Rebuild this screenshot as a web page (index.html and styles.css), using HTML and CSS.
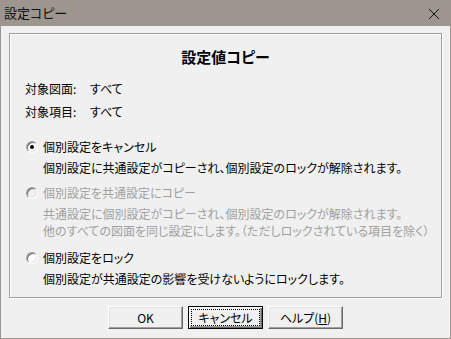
FILE: index.html
```html
<!DOCTYPE html>
<html lang="ja">
<head>
    <meta charset="UTF-8">
    <title>設定コピー</title>
    <link rel="stylesheet" href="styles.css">
</head>
<body>
    <div class="window">
        <div class="titlebar">
            <span class="title">設定コピー</span>
            <svg class="close" width="12" height="12" viewBox="0 0 12 12">
                <path d="M1 1 L11 11 M11 1 L1 11" stroke="#111" stroke-width="1" fill="none"/>
            </svg>
        </div>

        <div class="content">
            <div class="group">
                <h1>設定値コピー</h1>

                <div class="info"><span class="key">対象図面:</span><span>すべて</span></div>
                <div class="info"><span class="key">対象項目:</span><span>すべて</span></div>

                <div class="option first">
                    <div class="label"><span class="radio checked"></span>個別設定をキャンセル</div>
                    <div class="desc">個別設定に共通設定がコピーされ、個別設定のロックが解除されます。</div>
                </div>

                <div class="option disabled">
                    <div class="label"><span class="radio"></span>個別設定を共通設定にコピー</div>
                    <div class="desc">共通設定に個別設定がコピーされ、個別設定のロックが解除されます。</div>
                    <div class="desc">他のすべての図面を同じ設定にします。（ただしロックされている項目を除く）</div>
                </div>

                <div class="option last">
                    <div class="label"><span class="radio"></span>個別設定をロック</div>
                    <div class="desc">個別設定が共通設定の影響を受けないようにロックします。</div>
                </div>
            </div>

            <div class="buttons">
                <button class="btn">OK</button>
                <button class="btn default"><span class="focus">キャンセル</span></button>
                <button class="btn">ヘルプ(<u>H</u>)</button>
            </div>
        </div>
    </div>
</body>
</html>
```

FILE: styles.css
```css
html, body {
    margin: 0;
    padding: 0;
}
body {
    width: 451px;
    height: 339px;
    font-family: "Noto Sans CJK JP", "Noto Sans", sans-serif;
    font-size: 12px;
    font-feature-settings: "palt";
    color: #000;
    background: #f0f0f0;
}
.window {
    box-sizing: border-box;
    width: 451px;
    height: 339px;
    border: 1px solid #9c968f;
    border-top: 0;
    background: #f0f0f0;
}
.titlebar {
    height: 26px;
    margin: 0 -1px;
    background: #9c968f;
    display: flex;
    align-items: center;
    justify-content: space-between;
    padding: 0 11px 0 4px;
}
.title {
    font-size: 13px;
    line-height: 26px;
    color: #111;
}
.close {
    display: block;
    margin-top: 1px;
}
.content {
    padding: 7px 8px 0;
}
.group {
    height: 265px;
    box-sizing: border-box;
    border: 1px solid #a0a0a0;
    box-shadow: inset 1px 1px 0 #fff, 1px 1px 0 #fff;
    padding: 15px 0 0 15px;
}
h1 {
    margin: 0 0 0 -15px;
    font-size: 15px;
    line-height: 16px;
    font-weight: bold;
    text-align: center;
}
.info {
    line-height: 23px;
}
.info:first-of-type {
    margin-top: 12px;
}
.key {
    display: inline-block;
    width: 65px;
}
.option {
    margin-top: 8px;
}
.option.first {
    margin-top: 15px;
}
.option.last {
    margin-top: 10px;
}
.label {
    display: flex;
    align-items: center;
    height: 18px;
    line-height: 18px;
    padding-left: 1px;
}
.desc {
    padding-left: 18px;
    line-height: 17px;
    margin-top: 3px;
}
.desc + .desc {
    margin-top: 0;
}
.disabled {
    color: #a0a0a0;
}
.radio {
    position: relative;
    box-sizing: border-box;
    width: 12px;
    height: 12px;
    margin-right: 5px;
    border-radius: 50%;
    border: 1px solid;
    border-color: #a0a0a0 #fff #fff #a0a0a0;
    box-shadow: inset 1px 1px 0 #696969, inset -1px -1px 0 #e3e3e3;
    background: #fff;
}
.disabled .radio {
    background: #f0f0f0;
}
.radio.checked::after {
    content: "";
    position: absolute;
    left: 3px;
    top: 3px;
    width: 4px;
    height: 4px;
    border-radius: 50%;
    background: #000;
}
.buttons {
    display: flex;
    justify-content: center;
    gap: 5px;
    margin-top: 8px;
}
.btn {
    box-sizing: border-box;
    width: 75px;
    height: 23px;
    padding: 0;
    font-family: inherit;
    font-size: 12px;
    font-feature-settings: "palt";
    color: #000;
    background: #f0f0f0;
    border: 1px solid;
    border-color: #fff #696969 #696969 #fff;
    box-shadow: inset -1px -1px 0 #a0a0a0, inset 1px 1px 0 #e3e3e3;
}
.btn.default {
    border: 1px solid #000;
    box-shadow: inset 1px 1px 0 #fff, inset -1px -1px 0 #696969, inset -2px -2px 0 #a0a0a0;
}
.focus {
    display: block;
    margin: 0 3px;
    line-height: 15px;
    outline: 1px dotted #000;
}
```
